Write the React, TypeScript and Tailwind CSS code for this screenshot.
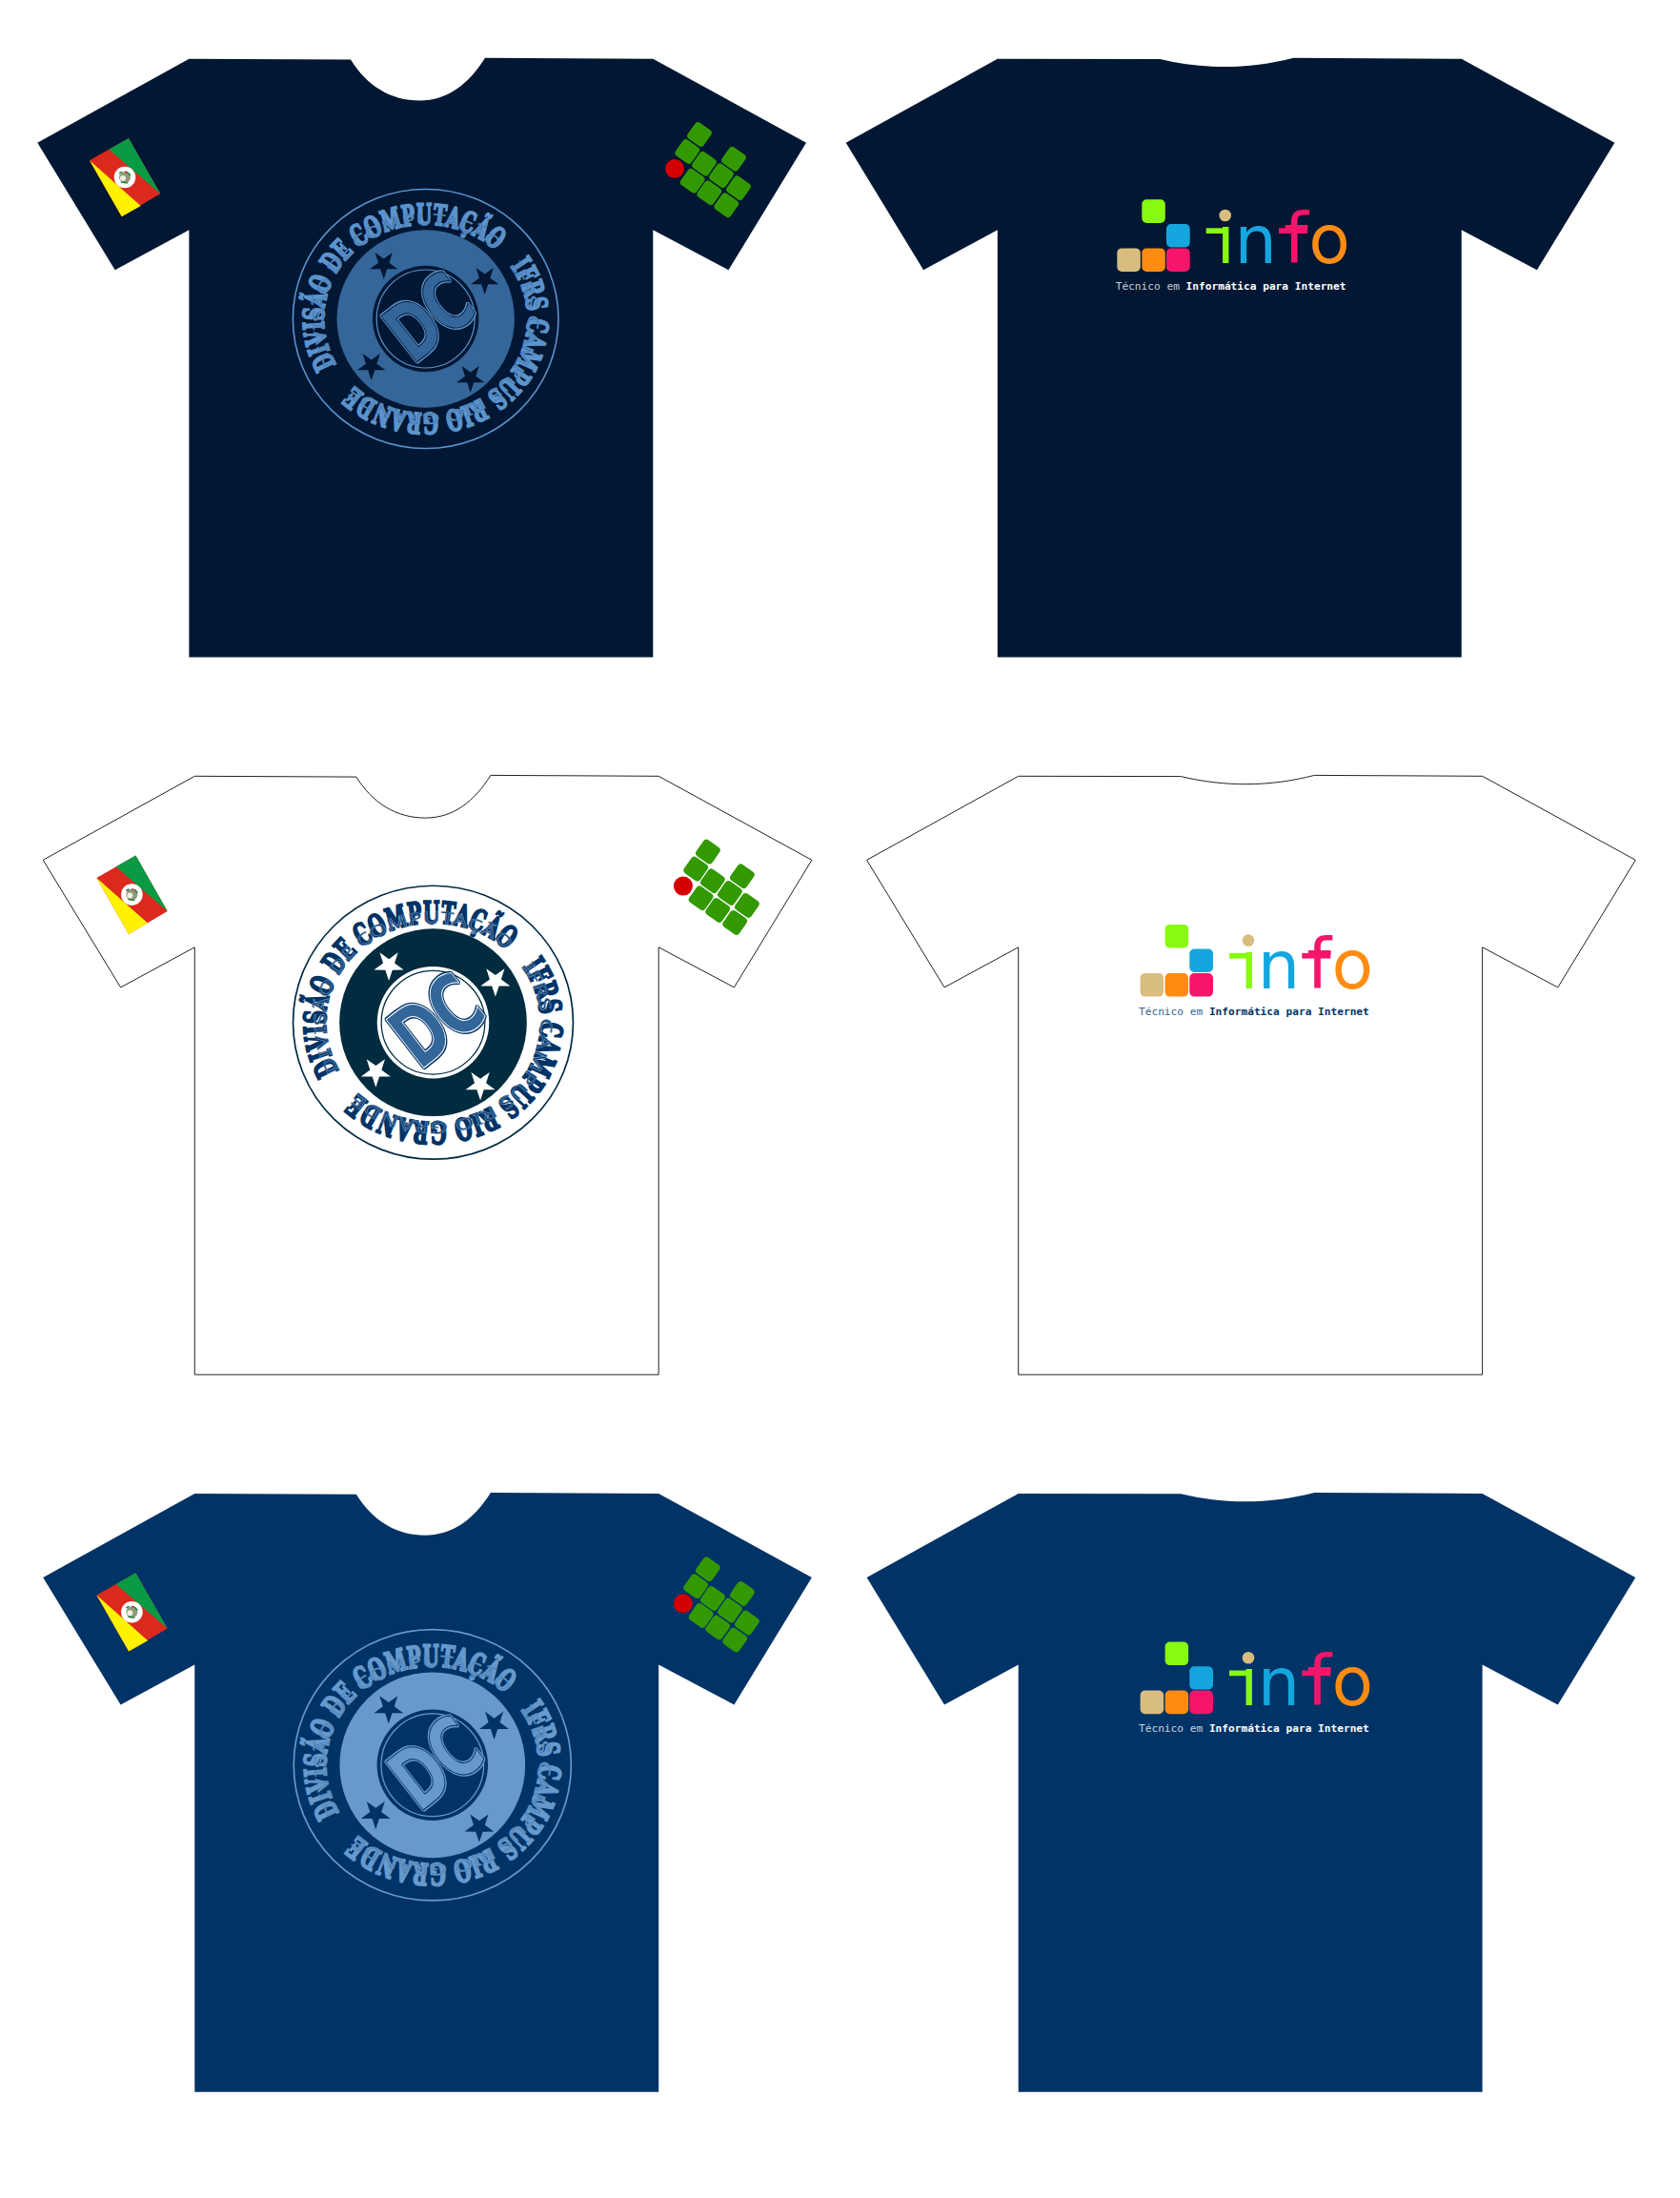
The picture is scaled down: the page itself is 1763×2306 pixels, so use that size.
const FRONT =
  "M198.4 61.7L368 62.5C385 90 410 105.5 440.5 105.5C470 105.5 492 88 509 60.8L685.3 61.7L846 149.7L764.5 283.3L685.3 241.2V689.6H198.4V241.2L120.7 283.3L39.3 149.7Z";
const BACK =
  "M198.4 61.7L369 62C415 73 462 73 509 60.8L685.3 61.7L846 149.7L764.5 283.3L685.3 241.2V689.6H198.4V241.2L120.7 283.3L39.3 149.7Z";

type Theme = {
  shirt: string;
  edge?: string;
  ring: string;
  disk: string;
  text: string;
  rim: string;
  line: string;
  hub: string;
  hubRing: string;
  star: string;
  dc: string;
  dcRim: string;
  dcLine: string;
};

const navy: Theme = {
  shirt: "#011733",
  ring: "#5b93cc",
  disk: "#35669a",
  text: "#6296cf",
  rim: "#5b93cc",
  line: "#3f74ab",
  hub: "#011733",
  hubRing: "#5b93cc",
  star: "#011733",
  dc: "#35669a",
  dcRim: "#5b93cc",
  dcLine: "#011733",
};
const white: Theme = {
  shirt: "#ffffff",
  edge: "#222222",
  ring: "#012b44",
  disk: "#012b3f",
  text: "#003366",
  rim: "#003366",
  line: "#6f93bb",
  hub: "#ffffff",
  hubRing: "#012b3f",
  star: "#ffffff",
  dc: "#336699",
  dcRim: "#003366",
  dcLine: "#ffffff",
};
const royal: Theme = {
  shirt: "#003366",
  ring: "#6699cc",
  disk: "#6699cc",
  text: "#6699cc",
  rim: "#6699cc",
  line: "#4c7fb2",
  hub: "#003366",
  hubRing: "#6699cc",
  star: "#003366",
  dc: "#6699cc",
  dcRim: "#6699cc",
  dcLine: "#003366",
};

function arc(rx: number, ry: number, from: number, to: number) {
  const p = (deg: number) => {
    const a = (deg * Math.PI) / 180;
    return `${(rx * Math.sin(a)).toFixed(2)} ${(-ry * Math.cos(a)).toFixed(2)}`;
  };
  return `M${p(from)}A${rx} ${ry} 0 ${to - from > 180 ? 1 : 0} 1 ${p(to)}`;
}

function Star({ x, y, fill }: { x: number; y: number; fill: string }) {
  const pts: string[] = [];
  for (let i = 0; i < 10; i++) {
    const r = i % 2 === 0 ? 15.5 : 6;
    const a = (i * 36 * Math.PI) / 180;
    pts.push(`${(x + r * Math.sin(a)).toFixed(2)},${(y + r * Math.cos(a)).toFixed(2)}`);
  }
  return <polygon points={pts.join(" ")} fill={fill} />;
}

function Emblem({ t, id, x, y, s }: { t: Theme; id: string; x: number; y: number; s: number }) {
  return (
    <g transform={`translate(${x} ${y}) scale(${s})`}>
      <ellipse rx={139.3} ry={136} fill="none" stroke={t.ring} strokeWidth={1.6} />
      <circle r={93.2} fill={t.disk} />
      <circle r={55.7} fill={t.hub} />
      <circle r={51.5} fill="none" stroke={t.hubRing} strokeWidth={1.2} />
      <Star x={-44} y={-57} fill={t.star} />
      <Star x={62} y={-41} fill={t.star} />
      <Star x={-57} y={49} fill={t.star} />
      <Star x={47} y={62} fill={t.star} />
      <path id={`${id}-a`} d={arc(107, 99, -119, 46)} fill="none" />
      <path id={`${id}-b`} d={arc(107, 99, 56, 227)} fill="none" />
      <g
        fontFamily="'DejaVu Serif','Liberation Serif',serif"
        fontWeight={700}
        fontSize={30}
        fill={t.rim}
        stroke={t.rim}
        strokeWidth={2.1}
        strokeLinejoin="miter"
      >
        <text id={`${id}-ta`}>
          <textPath href={`#${id}-a`} textLength={292} lengthAdjust="spacingAndGlyphs">
            DIVISÃO DE COMPUTAÇÃO
          </textPath>
        </text>
        <text id={`${id}-tb`}>
          <textPath href={`#${id}-b`} textLength={303} lengthAdjust="spacingAndGlyphs">
            IFRS CAMPUS RIO GRANDE
          </textPath>
        </text>
      </g>
      <use href={`#${id}-ta`} fill={t.text} stroke={t.line} strokeWidth={0.5} />
      <use href={`#${id}-tb`} fill={t.text} stroke={t.line} strokeWidth={0.5} />
      <g fontFamily="'DejaVu Sans',sans-serif" fontWeight={700} fontSize={84} strokeLinejoin="bevel">
        <g fill={t.dcRim} stroke={t.dcRim} strokeWidth={4}>
          <text id={`${id}-dc`} transform="rotate(-38) scale(0.7 1) translate(0 30)" x={-58} letterSpacing={-4}>
            DC
          </text>
        </g>
        <use href={`#${id}-dc`} fill={t.dc} stroke={t.dcLine} strokeWidth={1} />
      </g>
    </g>
  );
}

function Flag({ x, y }: { x: number; y: number }) {
  return (
    <g transform={`translate(${x} ${y})`}>
      <polygon points="135,145 94,168.3 127.7,227.3 168.3,203.3" fill="#dc291e" />
      <polygon points="135,145 114.3,156.7 168.3,203.3" fill="#0a9a44" />
      <polygon points="94,168.3 127.7,227.3 147.7,216" fill="#fff200" />
      <circle cx={131} cy={186} r={11.3} fill="#ffffff" />
      <circle cx={131} cy={186} r={6} fill="#8d9a7c" />
      <circle cx={129} cy={187} r={3} fill="#f1efe4" />
      <path d="M125 182l3 -2M134 181l3 3M127 191l7 1" stroke="#2c7a41" strokeWidth={1.5} />
      <path d="M131 180l3 1" stroke="#c8332a" strokeWidth={1.5} />
    </g>
  );
}

const CELLS: [number, number][] = [
  [734, 141],
  [721.3, 159],
  [739, 171.7],
  [770, 166.7],
  [757, 184.3],
  [726.7, 189.7],
  [744.3, 202.3],
  [775, 197.3],
  [762.3, 215.3],
];

function Campus({ x, y }: { x: number; y: number }) {
  return (
    <g transform={`translate(${x} ${y})`}>
      <circle cx={708} cy={177} r={10} fill="#d40000" />
      {CELLS.map(([cx, cy]) => (
        <rect
          key={`${cx}-${cy}`}
          x={cx - 10.3}
          y={cy - 10.3}
          width={20.6}
          height={20.6}
          rx={4}
          fill="#339900"
          transform={`rotate(35 ${cx} ${cy})`}
        />
      ))}
    </g>
  );
}

function Info({ x, y, soft, bold }: { x: number; y: number; soft: string; bold: string }) {
  return (
    <g transform={`translate(${x} ${y})`}>
      <rect x={1198.3} y={209.3} width={24.5} height={24.6} rx={5} fill="#88f911" />
      <rect x={1224} y={235} width={24.7} height={24.4} rx={5} fill="#16a6df" />
      <rect x={1172.3} y={260.4} width={24.5} height={24.6} rx={5} fill="#d9bd7f" />
      <rect x={1198.3} y={260.4} width={24.5} height={24.6} rx={5} fill="#ff8c12" />
      <rect x={1224} y={260.4} width={24.7} height={24.6} rx={5} fill="#f5156a" />
      <text fontFamily="'DejaVu Sans',sans-serif" fontSize={70} y={276}>
        <tspan x={1276.6} fill="#88f911">i</tspan>
        <tspan x={1295.5} fill="#16a6df">n</tspan>
        <tspan x={1347} fill="#f5156a" fontSize={73}>f</tspan>
        <tspan x={1373.5} fill="#ff8c12" fontFamily="Inter,sans-serif" fontSize={72}>o</tspan>
      </text>
      <rect x={1265.7} y={239.3} width={23} height={5.7} fill="#88f911" />
      <rect x={1342} y={239.3} width={30} height={5.7} fill="#f5156a" />
      <circle cx={1285.7} cy={226} r={6.3} fill="#d9bd7f" />
      <text x={1170.7} y={304} fontFamily="'DejaVu Sans Mono',monospace" fontSize={11.16} fill={soft}>
        Técnico em <tspan fontWeight={700} fill={bold}>Informática para Internet</tspan>
      </text>
    </g>
  );
}

function Shirt({
  t,
  id,
  back,
  dx,
  dy,
  emblem,
  flagX = 0,
  campusX = 0,
  logo,
  soft,
  bold,
}: {
  t: Theme;
  id: string;
  back?: boolean;
  dx: number;
  dy: number;
  emblem?: [number, number, number];
  flagX?: number;
  campusX?: number;
  logo?: [number, number];
  soft?: string;
  bold?: string;
}) {
  return (
    <svg className="block h-full w-full" xmlns="http://www.w3.org/2000/svg">
      <g transform={`translate(${dx} ${dy})`}>
        <path d={back ? BACK : FRONT} fill={t.shirt} stroke={t.edge ?? "none"} strokeWidth={1} />
        {emblem && (
          <>
            <Flag x={flagX} y={0} />
            <Campus x={campusX} y={0} />
            <Emblem t={t} id={id} x={emblem[0]} y={emblem[1]} s={emblem[2]} />
          </>
        )}
        {logo && <Info x={logo[0]} y={logo[1]} soft={soft ?? "#fff"} bold={bold ?? "#fff"} />}
      </g>
    </svg>
  );
}

export default function App() {
  return (
    <div className="grid h-[2306px] w-[1763px] grid-cols-[870px_893px] grid-rows-[752px_753px_801px] overflow-hidden bg-white">
      <Shirt t={navy} id="f1" dx={0} dy={0} emblem={[446.7, 334.5, 1]} />
      <Shirt t={navy} id="b1" back dx={-21.6} dy={0} logo={[-848.4, 0]} soft="#c9ced6" bold="#ffffff" />
      <Shirt t={white} id="f2" dx={5.9} dy={0.6} flagX={1.5} campusX={3} emblem={[448.6, 320.1, 1.055]} />
      <Shirt t={white} id="b2" back dx={0.3} dy={0.6} logo={[-846, 8]} soft="#336699" bold="#003366" />
      <Shirt t={royal} id="f3" dx={5.9} dy={0.2} flagX={1.5} campusX={3} emblem={[447.9, 346.6, 1.045]} />
      <Shirt t={royal} id="b3" back dx={0.3} dy={0.2} logo={[-846, 8]} soft="#c9d6e4" bold="#ffffff" />
    </div>
  );
}
